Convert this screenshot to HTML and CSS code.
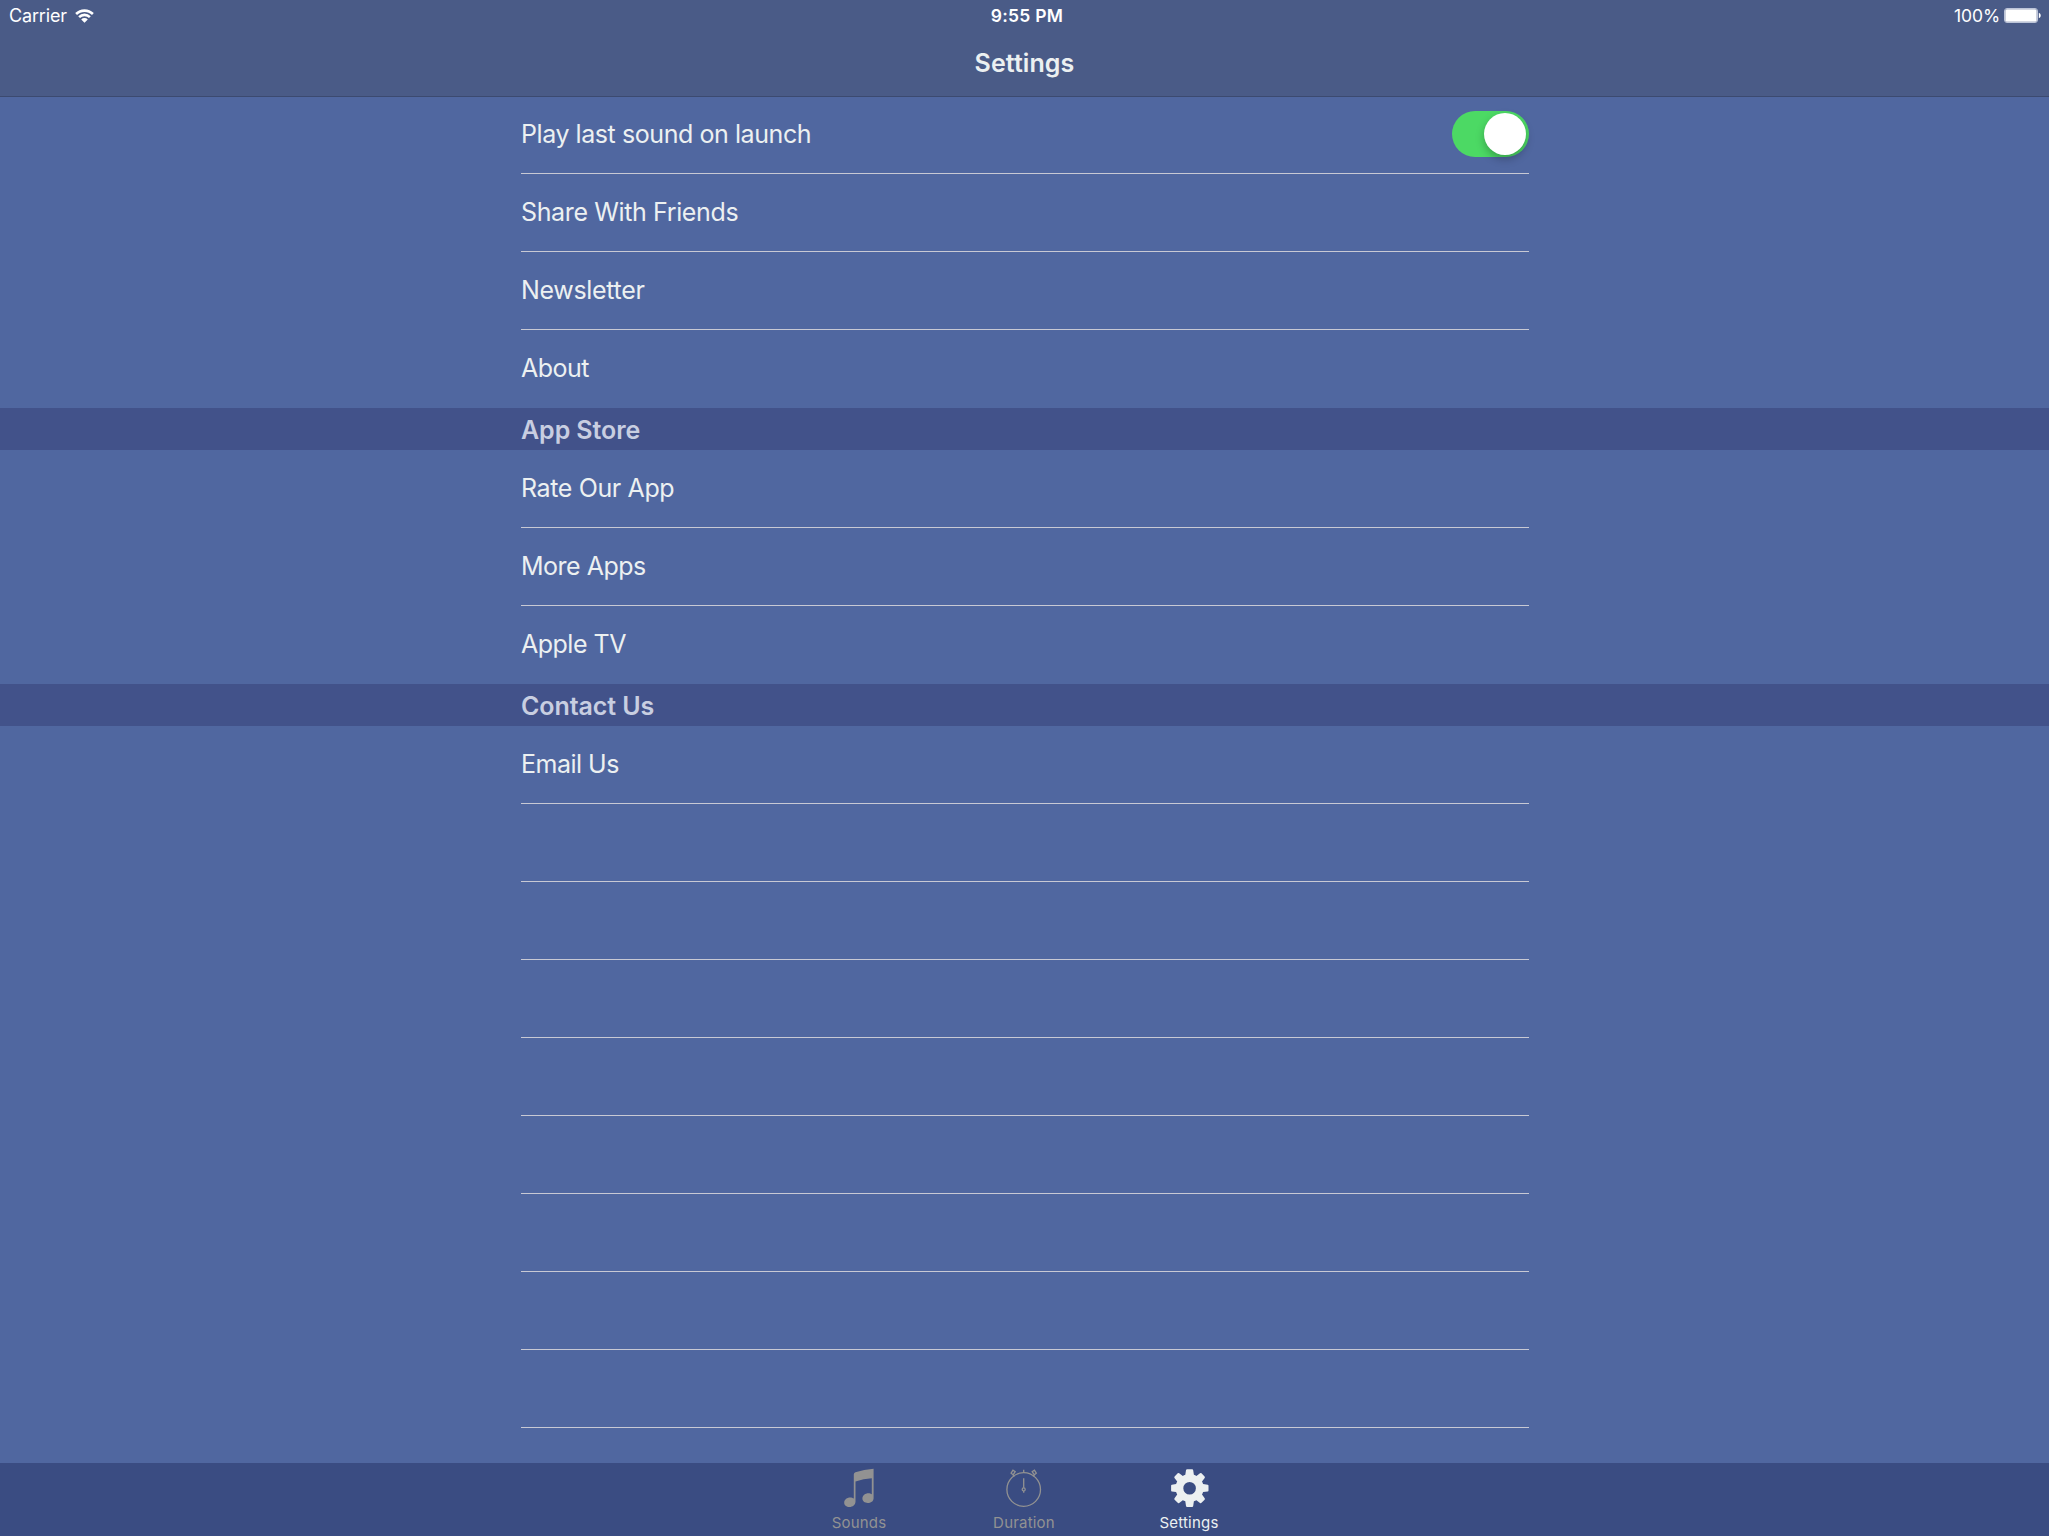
FILE: index.html
```html
<!DOCTYPE html>
<html lang="en">
<head>
<meta charset="utf-8">
<title>Settings</title>
<link rel="stylesheet" href="styles.css">
</head>
<body>
<div class="app">
  <header class="navbar">
    <div class="status">
      <div class="status-left">
        <span class="carrier">Carrier</span>
        <svg class="wifi" width="19" height="14" viewBox="0 0 19 14">
          <path d="M.2 4.1a13.2 13.2 0 0 1 18.6 0l-1.8 1.9a10.6 10.6 0 0 0-15 0zM3.2 7.2a8.9 8.9 0 0 1 12.6 0L14 9a6.4 6.4 0 0 0-9 0zM6.2 10.4a4.7 4.7 0 0 1 6.6 0L9.500 13.700z"/>
        </svg>
      </div>
      <span class="clock">9:55 PM</span>
      <div class="status-right">
        <span class="charge">100%</span>
        <svg class="battery" width="37" height="15" viewBox="0 0 37 15">
          <rect class="battery-case" x=".5" y=".5" width="33" height="14" rx="2.5"/>
          <rect class="battery-fill" x="1.3" y="1.3" width="31.4" height="12.4" rx="1.5"/>
          <path class="battery-fill" d="M34.8 4.8c1.1.4 1.9 1.4 1.9 2.7s-.8 2.3-1.9 2.7z"/>
        </svg>
      </div>
    </div>
    <h1 class="title">Settings</h1>
  </header>

  <main class="list">
    <section class="group">
      <div class="row"><span class="label play">Play last sound on launch</span><span class="switch"><span class="knob"></span></span></div>
      <div class="row"><span class="label">Share With Friends</span></div>
      <div class="row"><span class="label newsletter">Newsletter</span></div>
      <div class="row last"><span class="label tight">About</span></div>
    </section>
    <section class="group">
      <h2 class="section-title">App Store</h2>
      <div class="row"><span class="label">Rate Our App</span></div>
      <div class="row"><span class="label tight">More Apps</span></div>
      <div class="row last"><span class="label tight">Apple TV</span></div>
    </section>
    <section class="group">
      <h2 class="section-title">Contact Us</h2>
      <div class="row"><span class="label tight">Email Us</span></div>
      <div class="row"></div>
      <div class="row"></div>
      <div class="row"></div>
      <div class="row"></div>
      <div class="row"></div>
      <div class="row"></div>
      <div class="row"></div>
      <div class="row"></div>
    </section>
  </main>

  <nav class="tabs">
    <div class="tab">
      <svg width="40" height="40" viewBox="0 0 40 40">
        <path class="glyph" d="M14.8 6.2Q15 4.8 16.4 4.3Q25 1.5 34.6 .8V30.2C34.6 33.300 31.700 35 28.700 35C25.700 35 23.400 33.200 23.400 30.600C23.400 27.400 26.200 25.200 29.400 25.200C30.800 25.200 32 25.700 32.800 26.300V10.300Q24.500 10.800 16.500 13.400V33.500C16.500 36.900 13.700 39 10.500 39C7.400 39 5.200 37.200 5.200 34.700C5.200 31.600 8 29.500 11.100 29.500C12.600 29.500 13.900 30 14.800 30.600Z"/>
      </svg>
      <span class="tab-name">Sounds</span>
    </div>
    <div class="tab">
      <svg width="40" height="40" viewBox="0 0 40 40">
        <g class="line">
          <circle cx="19.700" cy="21.500" r="16.800"/>
          <path d="M19.700 1.700V5M19.700 10.200V19.800M19.700 23V24.800"/>
          <circle cx="19.700" cy="21.400" r="1.500"/>
          <path d="M7.100 5.200L9 2.200L11.200 3.600L9.100 6.800ZM8.700 7L10.700 8.300M32.300 5.200L30.400 2.200L28.200 3.600L30.300 6.800ZM30.700 7L28.700 8.300"/>
        </g>
      </svg>
      <span class="tab-name">Duration</span>
    </div>
    <div class="tab active">
      <svg width="40" height="40" viewBox="0 0 40 40">
        <path class="glyph" transform="translate(.6 0)" fill-rule="evenodd" d="M16.400 2.200Q16.600 1.300 17.500 1.300H22.500Q23.400 1.300 23.600 2.200L24.300 6.800Q25.600 7.200 26.800 7.900L30.400 5.200Q31.200 4.700 31.900 5.300L35 8.400Q35.600 9.100 35.100 9.900L32.400 13.500Q33.100 14.700 33.500 16L38.100 16.700Q38.900 16.900 38.900 17.800V22.400Q38.900 23.200 38.100 23.400L33.500 24.100Q33.100 25.400 32.400 26.600L35.100 30.200Q35.600 31 35 31.700L31.900 34.800Q31.200 35.400 30.400 34.900L26.800 32.200Q25.600 32.900 24.300 33.300L23.600 37.900Q23.400 38.900 22.500 38.900H17.500Q16.600 38.900 16.400 37.900L15.700 33.300Q14.400 32.900 13.200 32.200L9.600 34.900Q8.800 35.400 8.100 34.800L5 31.700Q4.400 31 4.900 30.200L7.600 26.600Q6.900 25.400 6.500 24.100L2.300 23.400Q1.500 23.200 1.500 22.400V17.800Q1.500 16.900 2.300 16.700L6.500 16Q6.900 14.700 7.600 13.500L4.900 9.900Q4.400 9.100 5 8.400L8.100 5.300Q8.800 4.700 9.600 5.200L13.200 7.900Q14.400 7.200 15.700 6.800ZM20 13.900A6.300 6.300 0 1 0 20 26.500A6.300 6.300 0 1 0 20 13.900Z"/>
      </svg>
      <span class="tab-name">Settings</span>
    </div>
  </nav>
</div>
</body>
</html>
```
FILE: styles.css
```css
* { box-sizing: border-box; }

body {
  margin: 0;
  background: #5067a0;
  color: #ecf0f1;
  font-family: Inter, "Liberation Sans", sans-serif;
  font-size: 25px;
}

.app {
  display: flex;
  flex-direction: column;
  height: 1536px;
  overflow: hidden;
}

.navbar {
  flex: none;
  height: 96px;
  background: #4a5b87;
  box-shadow: 0 1px 0 #3c4a70;
  z-index: 1;
}

.status {
  display: grid;
  grid-template-columns: 1fr auto 1fr;
  align-items: center;
  height: 31px;
  padding: 0 8px 0 9px;
  color: #fff;
  font-size: 18px;
  line-height: 31px;
}

.status-left,
.status-right {
  display: flex;
  align-items: center;
}

.status-left { gap: 8px; }
.status-right { justify-content: flex-end; gap: 4px; }
.carrier { letter-spacing: -.15px; }
.clock { padding-left: 4px; font-size: 17.5px; font-weight: 600; letter-spacing: .25px; }
.charge { font-size: 17.5px; letter-spacing: -.1px; }
.wifi { fill: #fff; }
.battery-case { fill: none; stroke: #bcc4d8; }
.battery-fill { fill: #fff; }

.title {
  margin: 0;
  height: 65px;
  font-size: 25px;
  font-weight: 600;
  letter-spacing: .08px;
  line-height: 64px;
  text-align: center;
}

.list {
  flex: 1;
  min-height: 0;
  overflow: hidden;
}

.row {
  display: flex;
  align-items: center;
  justify-content: space-between;
  height: 78px;
  margin: 0 520px 0 521px;
  border-bottom: 1px solid #c8c9d4;
}

.row.last { border-bottom-color: transparent; }

.label {
  margin-top: -1px;
  line-height: 30px;
  letter-spacing: -.37px;
  white-space: nowrap;
}

.label.play { letter-spacing: -.43px; }
.label.newsletter { letter-spacing: -.32px; }
.label.tight { letter-spacing: -.5px; }

.section-title {
  margin: 0;
  height: 42px;
  padding-left: 521px;
  background: #42528a;
  color: #c8cee1;
  font-size: 25px;
  font-weight: 600;
  letter-spacing: -.08px;
  line-height: 44px;
}

.switch {
  display: flex;
  justify-content: flex-end;
  width: 77px;
  height: 46px;
  margin-bottom: 1px;
  padding: 2px 3px;
  border-radius: 23px;
  background: #4cd964;
}

.knob {
  width: 42px;
  height: 42px;
  border-radius: 50%;
  background: #fff;
  box-shadow: 0 4px 8px rgba(0, 0, 0, .26);
}

.tabs {
  display: flex;
  justify-content: center;
  flex: none;
  height: 73px;
  background: #3a4c82;
}

.tab {
  display: flex;
  flex-direction: column;
  align-items: center;
  width: 165px;
  padding: 5px 1px 0 0;
  color: #929292;
  font-size: 15px;
  letter-spacing: .2px;
  line-height: 20px;
}

.tab svg { flex: none; margin-bottom: 5px; }
.tab.active { color: #ecf0f1; }
.glyph { fill: currentColor; }
.line { fill: none; stroke: currentColor; stroke-width: 1.3; }
```
